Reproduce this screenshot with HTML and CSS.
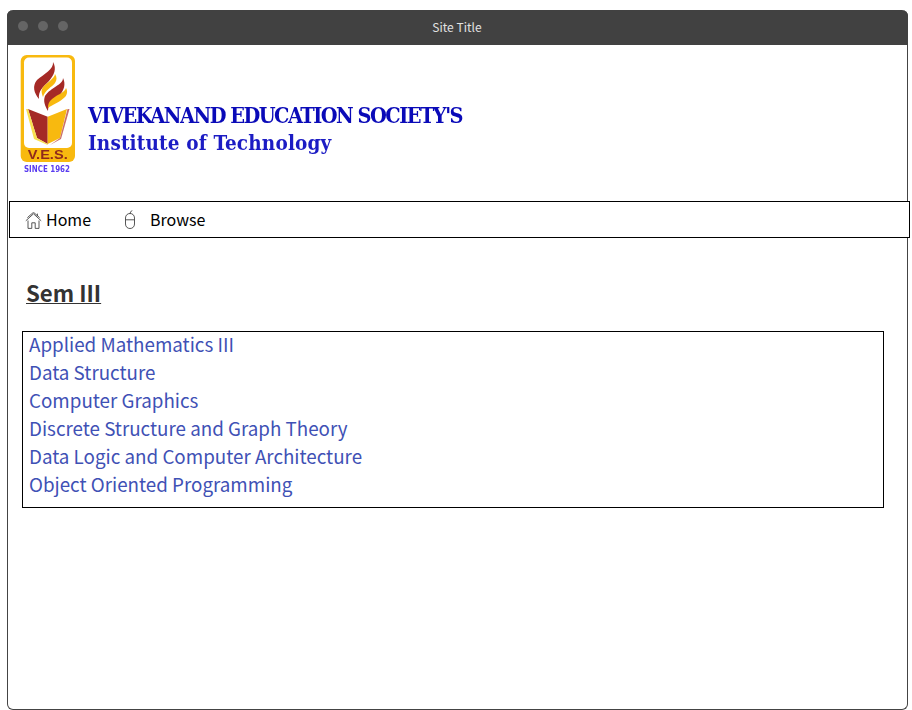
FILE: index.html
```html
<!DOCTYPE html>
<html lang="en">
<head>
<meta charset="utf-8">
<title>Site Title</title>
<link rel="stylesheet" href="styles.css">
</head>
<body>
<div class="window">
  <header class="titlebar">
    <div class="dots"><span class="dot"></span><span class="dot"></span><span class="dot"></span></div>
    <div class="title">Site Title</div>
  </header>
  <div class="banner">
    <svg class="logo" width="56" height="120" viewBox="0 0 56 120" aria-hidden="true">
      <rect x="0.700" y="1" width="54.300" height="107" rx="6" fill="#f8b90f"/>
      <rect x="4" y="3.500" width="48" height="90.500" rx="5" fill="#fff"/>
      <path d="M33 8C34 15 24 20 17 26C12 32 14 39 19 45C18 37 23 33 29 27C34 21 37 15 33 8Z" fill="#a52a26"/>
      <path d="M35 20C35 25 25 29 22 35C21 38 22 40 23 43C25 36 32 33 35 29C37 26 37 23 35 20Z" fill="#f8b90f"/>
      <path d="M43 24C43 31 31 33 25 42C23 47 25 52 28 57C28 49 34 46 40 41C44 36 46 30 43 24Z" fill="#a52a26"/>
      <path d="M46 34C45 39 35 41 30 47C28 50 28 52 28 54C32 51 40 48 45 43C47 41 48 37 46 34Z" fill="#f8b90f"/>
      <path d="M8 55L27.700 62.700V90L17 84Z" fill="#a52a26"/>
      <path d="M6 55L8 55L17 84L27.700 90V91L14 85Z" fill="#f8e050"/>
      <path d="M47 55L27.700 62.700V90L40 84Z" fill="#f8b90f"/>
      <path d="M47.500 55L49.500 55L41 85L30 91L40 84Z" fill="#c9706a"/>
      <text class="ves" x="7.700" y="105" textLength="40" lengthAdjust="spacingAndGlyphs">V.E.S.</text>
      <text class="since" x="4" y="118" textLength="46" lengthAdjust="spacingAndGlyphs">SINCE 1962</text>
    </svg>
    <div class="brand">
      <div class="brand-top">VIVEKANAND EDUCATION SOCIETY'S</div>
      <div class="brand-sub">Institute of Technology</div>
    </div>
  </div>
  <nav class="nav">
    <a class="nav-item" href="#">
      <svg class="icon-home" width="17" height="17" viewBox="0 0 17 17" aria-hidden="true">
        <path d="M0.800 8.800L8.500 1.800L16.200 8.800M2.400 5.600L8.500 0.300L14.600 5.600M3 8.500V16.400H6.800V10.800H10.200V16.400H14V8.500M12.400 1.600V4" fill="none" stroke="#444" stroke-width="0.900"/>
      </svg>
      <span>Home</span>
    </a>
    <a class="nav-item nav-browse" href="#">
      <svg class="icon-mouse" width="12" height="19" viewBox="0 0 12 19" aria-hidden="true">
        <path d="M6 4C6 2.600 7 1.200 8.500 0M1.500 8C1.500 5.200 3.500 3.500 6 3.500C8.500 3.500 10.500 5.200 10.500 8V14C10.500 16.800 8.500 18.500 6 18.500C3.500 18.500 1.500 16.800 1.500 14ZM1.500 9.800H10.500" fill="none" stroke="#444" stroke-width="0.900"/>
      </svg>
      <span>Browse</span>
    </a>
  </nav>
  <main class="content">
    <h2 class="heading">Sem III</h2>
    <ul class="subjects">
      <li><a href="#">Applied Mathematics III</a></li>
      <li><a href="#">Data Structure</a></li>
      <li><a href="#">Computer Graphics</a></li>
      <li><a href="#">Discrete Structure and Graph Theory</a></li>
      <li><a href="#">Data Logic and Computer Architecture</a></li>
      <li><a href="#">Object Oriented Programming</a></li>
    </ul>
  </main>
</div>
</body>
</html>
```
FILE: styles.css
```css
* { box-sizing: border-box; }
html, body { margin: 0; height: 100%; background: #fff; overflow: hidden; }
body { padding: 10px 4px 0 7px; font-family: "Noto Sans CJK SC", "Noto Sans", sans-serif; }
.window {
  width: 901px;
  height: 700px;
  border: 1px solid #444;
  border-top: 0;
  border-radius: 6px;
  background: #fff;
}
.titlebar {
  height: 35px;
  margin: 0 -1px;
  background: #414141;
  border-radius: 6px 6px 0 0;
  display: flex;
  align-items: center;
  position: relative;
  padding-left: 11px;
}
.dots { display: flex; gap: 10px; margin-top: -3px; }
.dot { width: 10px; height: 10px; border-radius: 50%; background: #656565; }
.title {
  position: absolute;
  left: 0;
  right: 0;
  top: -1px;
  text-align: center;
  color: #e2e2e2;
  font-size: 12px;
  letter-spacing: 0.03px;
  line-height: 35px;
  padding-right: 1px;
}
.banner {
  height: 156px;
  padding: 9px 0 0 12px;
  display: flex;
  align-items: flex-start;
}
.logo { flex: none; filter: blur(0.4px); }
.ves { font: bold 13px "Liberation Sans", sans-serif; fill: #8f2a1c; }
.since { font: bold 8px "DejaVu Sans", sans-serif; font-stretch: condensed; fill: #5a3cf0; }
.brand {
  margin: 48px 0 0 12px;
  font-family: "DejaVu Serif", serif;
  font-stretch: condensed;
  font-weight: bold;
  color: #0a0ab8;
  filter: blur(0.45px);
  white-space: nowrap;
}
.brand-top { font-size: 21.500px; line-height: 27px; letter-spacing: -1.500px; }
.brand-sub { font-size: 20.500px; line-height: 28px; letter-spacing: 0.170px; color: #1c1cc4; }
.nav {
  width: 901px;
  height: 37px;
  margin-left: 1px;
  border: 1px solid #000;
  display: flex;
  align-items: center;
  padding-left: 15px;
  background: #fff;
  position: relative;
}
.nav-item {
  display: flex;
  align-items: center;
  color: #000;
  text-decoration: none;
  font-size: 16px;
  line-height: 24px;
}
.nav-item span { margin-top: -2px; }
.icon-home { margin-right: 4px; margin-top: 1px; }
.nav-browse { margin-left: 33px; }
.icon-mouse { margin-right: 14px; }
.content { padding: 0 0 0 14px; }
.heading {
  margin: 38px 0 0 4px;
  font-size: 22.200px;
  line-height: 33px;
  font-weight: bold;
  color: #333;
  text-decoration: underline;
  text-decoration-thickness: 1px;
}
.subjects {
  list-style: none;
  margin: 22px 0 0 0;
  padding: 0 6px;
  width: 862px;
  height: 177px;
  border: 1px solid #000;
}
.subjects li { font-size: 18.800px; line-height: 28px; }
.subjects li:first-child { margin-top: -2px; }
.subjects a { color: #3f51b5; text-decoration: none; }
```
